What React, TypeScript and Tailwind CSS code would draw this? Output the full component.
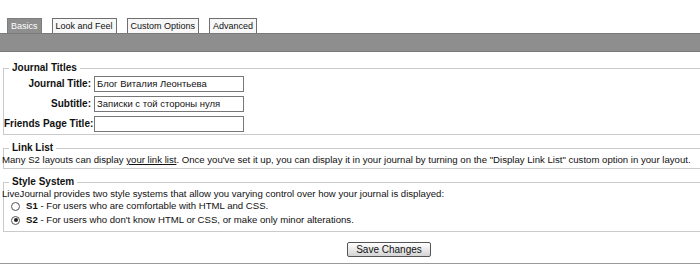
import React from 'react';

const tabs = ['Basics', 'Look and Feel', 'Custom Options', 'Advanced'];

const rows = [
  { label: 'Journal Title:', value: 'Блог Виталия Леонтьева' },
  { label: 'Subtitle:', value: 'Записки с той стороны нуля' },
  { label: 'Friends Page Title:', value: '' },
];

function Legend({ children }: { children: React.ReactNode }) {
  return <legend className="ml-[5px] px-[3px] font-bold text-[10px] leading-[12px]">{children}</legend>;
}

export default function App() {
  return (
    <div
      className="w-[700px] h-[264px] overflow-hidden bg-white text-[#111] text-[9.6px] leading-[12px]"
      style={{ fontFamily: '"Liberation Sans", Arial, sans-serif' }}
    >
      <div className="w-[778px]">
        {/* Tabs */}
        <div className="flex items-end gap-[10px] pl-[7px] pt-[18px] h-[33px]">
          {tabs.map((t, i) => (
            <div
              key={t}
              className={
                i === 0
                  ? 'h-[15px] px-[3px] border border-b-0 border-[#7d7d7d] bg-[#8e8e8e] text-white text-[9px] leading-[14px]'
                  : 'h-[15px] px-[3px] border border-b-0 border-[#6f6f6f] bg-[#f7f7f7] text-[#111] text-[9px] leading-[14px]'
              }
            >
              {t}
            </div>
          ))}
        </div>
        <div className="h-[19px] bg-[#8e8e8e] border-t border-b border-[#7a7a7a]" />

        {/* Journal Titles */}
        <fieldset className="mt-[10px] ml-[3px] border border-[#cacaca] pb-[2px]">
          <Legend>Journal Titles</Legend>
          <div className="grid grid-cols-[87px_auto] gap-x-[3px] gap-y-[4px] pt-[2px] items-center justify-start">
            {rows.map((r) => (
              <React.Fragment key={r.label}>
                <div className="text-right font-bold text-[10px] whitespace-nowrap">{r.label}</div>
                <div className="w-[150px] h-[16px] border border-[#777] bg-white px-[2px] text-[9.5px] leading-[14px] whitespace-nowrap overflow-hidden">
                  {r.value}
                </div>
              </React.Fragment>
            ))}
          </div>
        </fieldset>

        {/* Link List */}
        <fieldset className="mt-[7px] ml-[3px] border border-[#cacaca] pb-[2px]">
          <Legend>Link List</Legend>
          <div className="-ml-[2px] whitespace-nowrap">
            Many S2 layouts can display <span className="underline">your link list</span>. Once you've set it up, you
            can display it in your journal by turning on the "Display Link List" custom option in your layout.
          </div>
        </fieldset>

        {/* Style System */}
        <fieldset className="mt-[7px] ml-[3px] border border-[#cacaca] pb-[5px]">
          <Legend>Style System</Legend>
          <div className="-ml-[2px] whitespace-nowrap">
            LiveJournal provides two style systems that allow you varying control over how your journal is displayed:
          </div>
          <div className="flex flex-col gap-[2px]">
            {[
              { k: 'S1', d: 'For users who are comfortable with HTML and CSS.', on: false },
              { k: 'S2', d: "For users who don't know HTML or CSS, or make only minor alterations.", on: true },
            ].map((o) => (
              <div key={o.k} className="flex items-center h-[12px] whitespace-nowrap">
                <span className="ml-[7px] mr-[6px] w-[9px] h-[9px] rounded-full border border-[#555] bg-white flex items-center justify-center">
                  {o.on && <span className="w-[4px] h-[4px] rounded-full bg-[#222]" />}
                </span>
                <span>
                  <b>{o.k}</b> - {o.d}
                </span>
              </div>
            ))}
          </div>
        </fieldset>

        {/* Save */}
        <div className="flex justify-center mt-[10px]">
          <button className="w-[84px] h-[15px] border border-[#555] rounded-[2px] bg-gradient-to-b from-white to-[#d4d4d4] text-[10px] leading-[13px] text-[#111]">
            Save Changes
          </button>
        </div>
        <div className="mt-[6px] h-[2px] bg-[#9a9a9a]" />
      </div>
    </div>
  );
}
